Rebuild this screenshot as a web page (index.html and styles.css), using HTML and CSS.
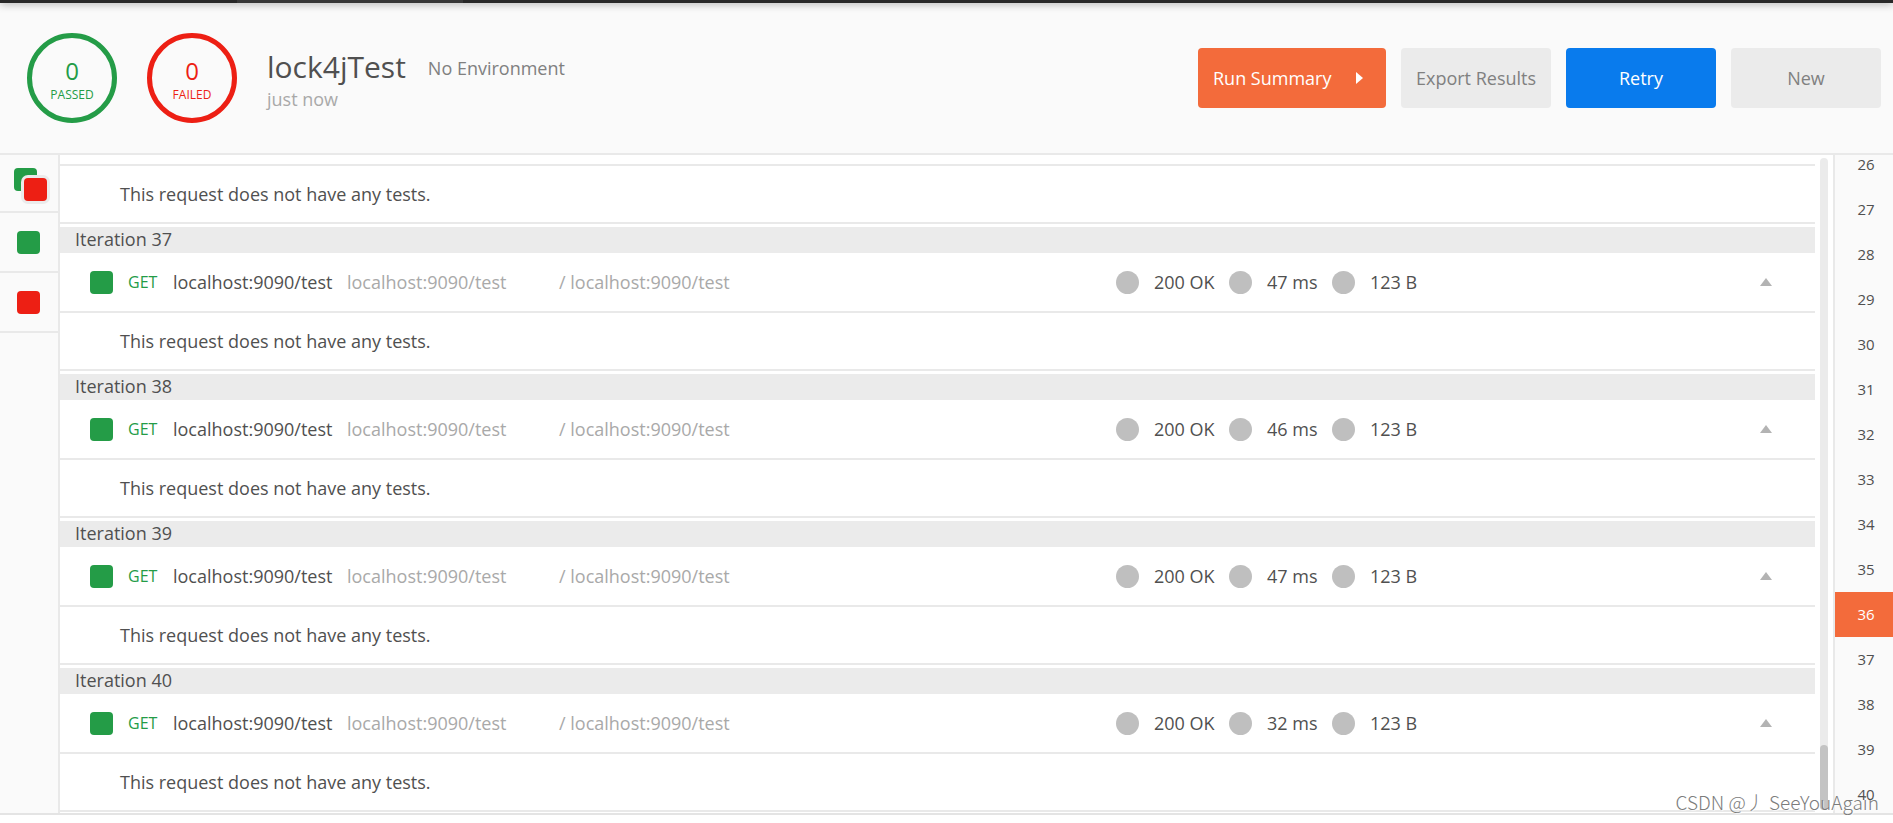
FILE: index.html
```
<!DOCTYPE html>
<html lang="en">
<head>
    <meta charset="UTF-8">
    <meta name="viewport" content="width=device-width, initial-scale=1.0">
    <title>Collection Runner</title>
    <link rel="stylesheet" href="styles.css">
</head>
<body>
    <div class="tab-strip"><div class="tab-active"></div></div>

    <!-- Run header -->
    <header class="header">
        <div class="count passed"><span class="number">0</span><span class="label">PASSED</span></div>
        <div class="count failed"><span class="number">0</span><span class="label">FAILED</span></div>
        <div class="run-info">
            <div class="run-title">
                <h1>lock4jTest</h1>
                <span class="environment">No Environment</span>
            </div>
            <div class="run-time">just now</div>
        </div>
        <div class="actions">
            <button class="button summary">Run Summary
                <svg width="7" height="12" viewBox="0 0 7 12"><path d="M0 0L7 6L0 12Z" fill="#fff"/></svg>
            </button>
            <button class="button">Export Results</button>
            <button class="button retry">Retry</button>
            <button class="button">New</button>
        </div>
    </header>

    <div class="runner">
        <!-- Result filters -->
        <nav class="filters">
            <button class="filter" aria-label="All tests"><span class="both"><span class="square green"></span><span class="square red front"></span></span></button>
            <button class="filter" aria-label="Passed tests"><span class="square green"></span></button>
            <button class="filter" aria-label="Failed tests"><span class="square red"></span></button>
        </nav>

        <main class="results">
            <div class="request-end"></div>
            <div class="message">This request does not have any tests.</div>

            <section class="iteration">
                <h2>Iteration 37</h2>
                <div class="request">
                    <span class="square green"></span>
                    <span class="method">GET</span>
                    <span class="name">localhost:9090/test</span>
                    <span class="url">localhost:9090/test</span>
                    <span class="path">/ localhost:9090/test</span>
                    <span class="dot"></span><span class="status">200 OK</span>
                    <span class="dot"></span><span class="time">47 ms</span>
                    <span class="dot"></span><span class="size">123 B</span>
                    <button class="toggle" aria-label="Collapse"><svg width="12" height="8" viewBox="0 0 12 8"><path d="M6 0L12 8H0Z" fill="#b3b3b3"/></svg></button>
                </div>
                <div class="message">This request does not have any tests.</div>
            </section>

            <section class="iteration">
                <h2>Iteration 38</h2>
                <div class="request">
                    <span class="square green"></span>
                    <span class="method">GET</span>
                    <span class="name">localhost:9090/test</span>
                    <span class="url">localhost:9090/test</span>
                    <span class="path">/ localhost:9090/test</span>
                    <span class="dot"></span><span class="status">200 OK</span>
                    <span class="dot"></span><span class="time">46 ms</span>
                    <span class="dot"></span><span class="size">123 B</span>
                    <button class="toggle" aria-label="Collapse"><svg width="12" height="8" viewBox="0 0 12 8"><path d="M6 0L12 8H0Z" fill="#b3b3b3"/></svg></button>
                </div>
                <div class="message">This request does not have any tests.</div>
            </section>

            <section class="iteration">
                <h2>Iteration 39</h2>
                <div class="request">
                    <span class="square green"></span>
                    <span class="method">GET</span>
                    <span class="name">localhost:9090/test</span>
                    <span class="url">localhost:9090/test</span>
                    <span class="path">/ localhost:9090/test</span>
                    <span class="dot"></span><span class="status">200 OK</span>
                    <span class="dot"></span><span class="time">47 ms</span>
                    <span class="dot"></span><span class="size">123 B</span>
                    <button class="toggle" aria-label="Collapse"><svg width="12" height="8" viewBox="0 0 12 8"><path d="M6 0L12 8H0Z" fill="#b3b3b3"/></svg></button>
                </div>
                <div class="message">This request does not have any tests.</div>
            </section>

            <section class="iteration">
                <h2>Iteration 40</h2>
                <div class="request">
                    <span class="square green"></span>
                    <span class="method">GET</span>
                    <span class="name">localhost:9090/test</span>
                    <span class="url">localhost:9090/test</span>
                    <span class="path">/ localhost:9090/test</span>
                    <span class="dot"></span><span class="status">200 OK</span>
                    <span class="dot"></span><span class="time">32 ms</span>
                    <span class="dot"></span><span class="size">123 B</span>
                    <button class="toggle" aria-label="Collapse"><svg width="12" height="8" viewBox="0 0 12 8"><path d="M6 0L12 8H0Z" fill="#b3b3b3"/></svg></button>
                </div>
                <div class="message">This request does not have any tests.</div>
            </section>
        </main>

        <div class="scrollbar"><div class="thumb"></div></div>

        <!-- Iteration index -->
        <nav class="index">
            <div class="index-list">
                <a href="#">26</a>
                <a href="#">27</a>
                <a href="#">28</a>
                <a href="#">29</a>
                <a href="#">30</a>
                <a href="#">31</a>
                <a href="#">32</a>
                <a href="#">33</a>
                <a href="#">34</a>
                <a href="#">35</a>
                <a href="#" class="active">36</a>
                <a href="#">37</a>
                <a href="#">38</a>
                <a href="#">39</a>
                <a href="#">40</a>
            </div>
        </nav>
    </div>

    <div class="watermark">CSDN @丿 SeeYouAgain</div>
</body>
</html>
```
FILE: styles.css
```
* {
    box-sizing: border-box;
}
body {
    margin: 0;
    height: 100vh;
    padding-bottom: 8px;
    display: flex;
    flex-direction: column;
    overflow: hidden;
    font-family: "Open Sans", sans-serif;
    font-size: 18px;
    line-height: 26px;
    color: #505050;
    background: #fff;
}
button {
    font: inherit;
    border: none;
    padding: 0;
    cursor: pointer;
}
.tab-strip {
    flex: none;
    height: 3px;
    background: #282828;
    box-shadow: 0 0 8px rgba(0, 0, 0, 0.6);
    z-index: 1;
}
.tab-active {
    width: 226px;
    height: 3px;
    margin-left: 237px;
    background: #383838;
}
/* Header */
.header {
    flex: none;
    display: flex;
    align-items: center;
    height: 152px;
    padding: 0 12px 0 27px;
    background: #fafafa;
    border-bottom: 2px solid #e9e9e9;
}
.count {
    width: 90px;
    height: 90px;
    margin-right: 30px;
    padding-top: 6px;
    border: 5px solid;
    border-radius: 50%;
    display: flex;
    flex-direction: column;
    align-items: center;
    justify-content: center;
}
.passed {
    color: #249c47;
}
.failed {
    color: #ed1f14;
}
.number {
    font-size: 24px;
    line-height: 28px;
}
.label {
    font-size: 12px;
    line-height: 20px;
}
.run-info {
    padding-top: 4px;
}
.run-title {
    display: flex;
    align-items: center;
    gap: 22px;
}
h1 {
    margin: 0;
    font-size: 30px;
    font-weight: 400;
    line-height: 38px;
}
.environment {
    padding-top: 2px;
    color: #808080;
}
.run-time {
    color: #a9a9a9;
}
.actions {
    display: flex;
    gap: 15px;
    margin-left: auto;
}
.button {
    width: 150px;
    height: 60px;
    border-radius: 4px;
    background: #ebebeb;
    color: #808080;
}
.summary {
    width: 188px;
    padding: 0 23px 0 15px;
    display: flex;
    align-items: center;
    justify-content: space-between;
    background: #f36b3b;
    color: #fff;
}
.retry {
    background: #097bed;
    color: #fff;
}
/* Runner body */
.runner {
    flex: 1;
    min-height: 0;
    display: flex;
    border-bottom: 2px solid #e4e4e4;
}
.filters {
    width: 60px;
    background: #fafafa;
    border-right: 2px solid #e9e9e9;
}
.filter {
    width: 58px;
    height: 60px;
    padding-right: 2px;
    display: flex;
    align-items: center;
    justify-content: center;
    background: none;
    border-bottom: 2px solid #e9e9e9;
}
.filter:first-child {
    height: 58px;
    padding: 3px 0 0 2px;
}
.square {
    flex: none;
    display: block;
    width: 23px;
    height: 23px;
    border-radius: 4px;
}
.green {
    background: #249c47;
}
.red {
    background: #ed1f14;
}
.both {
    position: relative;
    width: 33px;
    height: 33px;
}
.front {
    position: absolute;
    right: 0;
    bottom: 0;
    box-shadow: 0 0 0 3px #ebebeb;
}
.results {
    flex: 1;
    min-width: 0;
    overflow: hidden;
}
.request-end {
    height: 11px;
    border-bottom: 2px solid #e9e9e9;
}
.message {
    height: 58px;
    padding: 15px 60px;
    border-bottom: 2px solid #e9e9e9;
}
.iteration {
    margin-top: 3px;
}
h2 {
    margin: 0;
    padding: 0 15px 2px;
    font-size: 18px;
    font-weight: 400;
    line-height: 24px;
    background: #ebebeb;
}
.request {
    display: flex;
    align-items: center;
    height: 60px;
    padding: 0 43px 0 30px;
    border-bottom: 2px solid #e9e9e9;
}
.method {
    width: 60px;
    padding-left: 15px;
    font-size: 16px;
    color: #249c47;
}
.name {
    width: 174px;
}
.url {
    width: 212px;
    color: #a9a9a9;
}
.path {
    width: 557px;
    color: #a9a9a9;
}
.dot {
    width: 23px;
    height: 23px;
    margin-right: 15px;
    border-radius: 50%;
    background: #bfbfbf;
}
.status {
    width: 75px;
}
.time {
    width: 65px;
}
.toggle {
    display: flex;
    margin-left: auto;
    background: none;
}
.scrollbar {
    width: 8px;
    margin: 3px 5px;
    border-radius: 4px;
    background: #ebebeb;
    display: flex;
    align-items: flex-end;
}
.thumb {
    width: 8px;
    height: 10%;
    border-radius: 4px;
    background: #c3c3c3;
}
/* Iteration index */
.index {
    width: 60px;
    overflow: hidden;
    background: #fafafa;
    border-left: 2px solid #e9e9e9;
}
.index-list {
    margin-top: -13px;
}
.index a {
    display: block;
    padding-left: 4px;
    font-size: 15px;
    line-height: 45px;
    text-align: center;
    text-decoration: none;
    color: #505050;
}
.index .active {
    background: #f36b3b;
    color: #fff;
}
.watermark {
    position: absolute;
    right: 14px;
    bottom: 8px;
    font-family: "Noto Sans CJK SC", sans-serif;
    font-size: 19px;
    font-weight: 300;
    color: #7c7c7c;
    text-shadow: 1px 1px 0 rgba(255, 255, 255, 0.6);
}
```
